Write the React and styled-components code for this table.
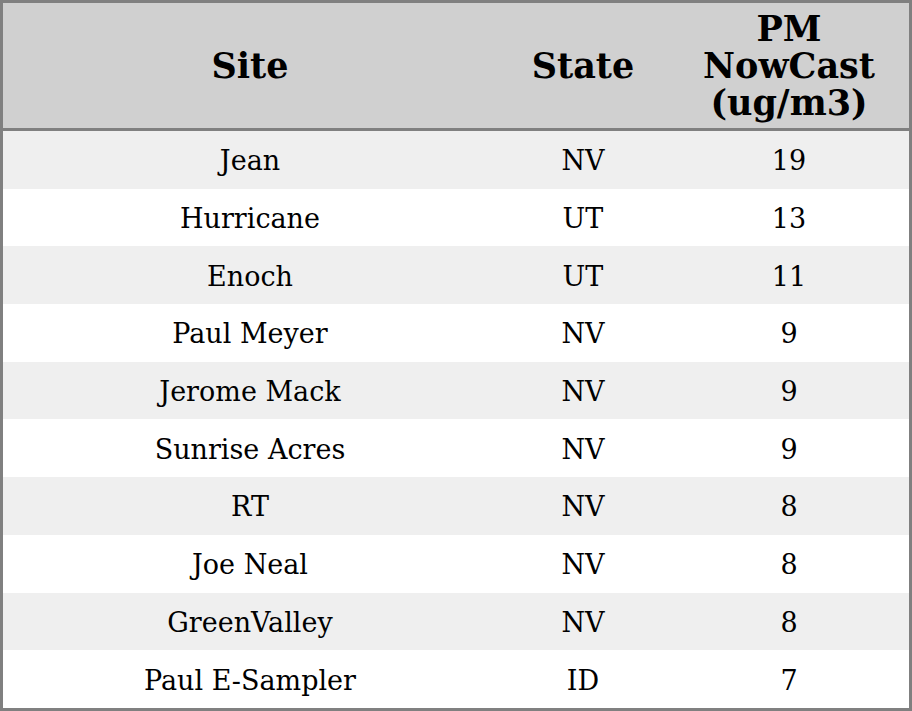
import React from 'react'
import styled, { createGlobalStyle } from 'styled-components'

const GlobalStyle = createGlobalStyle`
body{
margin:0;
background:#fff;
font-family:"DejaVu Serif", serif;
}
`

const Table = styled.table`
width:912px;
height:711px;
border-collapse:separate;
border-spacing:0;
border:3px solid #808080;
box-sizing:border-box;
table-layout:fixed;
color:#000;
`

const HeadCell = styled.th`
background:#d0d0d0;
border-bottom:3px solid #808080;
padding:7px 0;
font-size:35px;
line-height:37px;
font-weight:bold;
text-align:center;
width:${(props) => props.w}px;
`

const Row = styled.tr`
background:${(props) => (props.odd ? '#efefef' : '#ffffff')};
`

const Cell = styled.td`
font-size:27px;
line-height:30px;
text-align:center;
padding:3px 0 0;
`

const rows = [
  ['Jean', 'NV', 19],
  ['Hurricane', 'UT', 13],
  ['Enoch', 'UT', 11],
  ['Paul Meyer', 'NV', 9],
  ['Jerome Mack', 'NV', 9],
  ['Sunrise Acres', 'NV', 9],
  ['RT', 'NV', 8],
  ['Joe Neal', 'NV', 8],
  ['GreenValley', 'NV', 8],
  ['Paul E-Sampler', 'ID', 7],
]

function App() {
  return (
    <>
      <GlobalStyle />
      <Table>
        <thead>
          <tr>
            <HeadCell w={494}>Site</HeadCell>
            <HeadCell w={172}>State</HeadCell>
            <HeadCell w={240}>PM<br />NowCast<br />(ug/m3)</HeadCell>
          </tr>
        </thead>
        <tbody>
          {rows.map((r, i) => (
            <Row key={r[0]} odd={i % 2 === 0}>
              <Cell>{r[0]}</Cell>
              <Cell>{r[1]}</Cell>
              <Cell>{r[2]}</Cell>
            </Row>
          ))}
        </tbody>
      </Table>
    </>
  )
}

export default App
